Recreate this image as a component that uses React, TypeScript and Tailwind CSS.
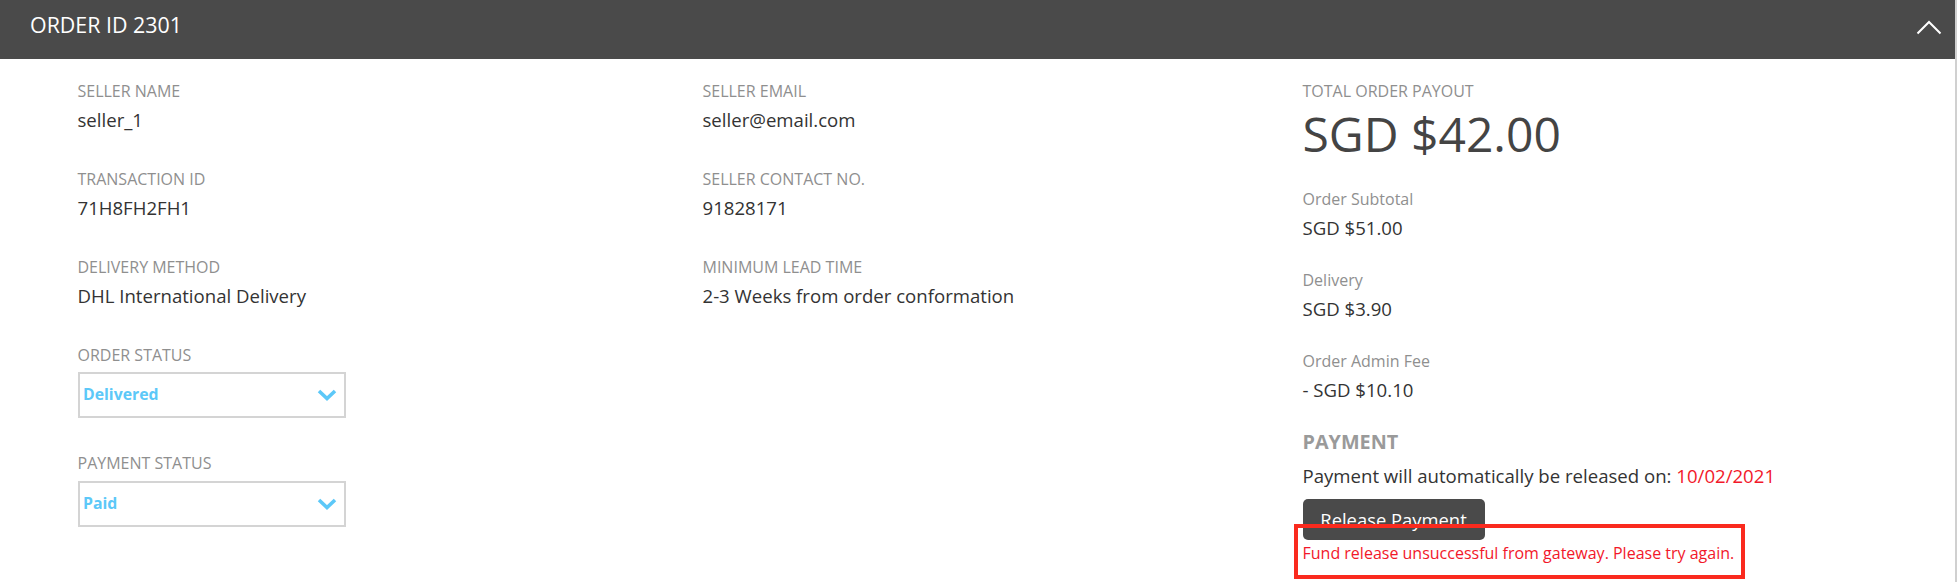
import React from "react";

function Label({ children }: { children: React.ReactNode }) {
  return <div className="text-[16px] leading-[22px] text-[#8f8f8f] whitespace-nowrap">{children}</div>;
}

function Value({ children, className = "" }: { children: React.ReactNode; className?: string }) {
  return (
    <div className={"mt-[5.5px] text-[18.6px] leading-[26px] text-[#333333] whitespace-nowrap " + className}>
      {children}
    </div>
  );
}

function Field({ label, value, className = "" }: { label: string; value: React.ReactNode; className?: string }) {
  return (
    <div className={className}>
      <Label>{label}</Label>
      <Value>{value}</Value>
    </div>
  );
}

function ChevronDown() {
  return (
    <svg width="20" height="12" viewBox="0 0 20 12" fill="none">
      <path d="M2 2 L10 9.5 L18 2" stroke="#5cc8f8" strokeWidth="3.6" strokeLinecap="butt" strokeLinejoin="miter" />
    </svg>
  );
}

function SelectBox({ value }: { value: string }) {
  return (
    <div className="flex h-[46px] w-[268px] items-center justify-between border-2 border-[#d4d4d4] bg-white pl-[3.5px] pr-[7px]">
      <span className="text-[15.8px] font-bold text-[#5cc8f8]">{value}</span>
      <ChevronDown />
    </div>
  );
}

export default function App() {
  return (
    <div className="h-[582px] w-[1957px] border-r-2 border-[#d0d0d0] bg-white font-['Open_Sans',sans-serif]">
      <div className="flex h-[59px] items-start justify-between bg-[#4a4a4a] pl-[30px] pr-[13px]">
        <div className="pt-[11px] text-[21.4px] leading-[28px] text-white">ORDER ID 2301</div>
        <svg className="mt-[20px]" width="26" height="15" viewBox="0 0 26 15" fill="none">
          <path d="M1.5 13.5 L13 2 L24.5 13.5" stroke="#ffffff" strokeWidth="2" />
        </svg>
      </div>

      <div className="grid grid-cols-[625px_600px_1fr] pl-[77.5px] pt-[20.5px]">
        {/* Column 1 */}
        <div className="flex flex-col">
          <Field label="SELLER NAME" value="seller_1" className="mb-[34.5px]" />
          <Field label="TRANSACTION ID" value="71H8FH2FH1" className="mb-[34.5px]" />
          <Field label="DELIVERY METHOD" value="DHL International Delivery" className="mb-[34.5px]" />
          <div className="mb-[34px]">
            <Label>ORDER STATUS</Label>
            <div className="mt-[6.5px]">
              <SelectBox value="Delivered" />
            </div>
          </div>
          <div>
            <Label>PAYMENT STATUS</Label>
            <div className="mt-[7px]">
              <SelectBox value="Paid" />
            </div>
          </div>
        </div>

        {/* Column 2 */}
        <div className="flex flex-col">
          <Field label="SELLER EMAIL" value="seller@email.com" className="mb-[34.5px]" />
          <Field label="SELLER CONTACT NO." value="91828171" className="mb-[34.5px]" />
          <Field label="MINIMUM LEAD TIME" value="2-3 Weeks from order conformation" />
        </div>

        {/* Column 3 */}
        <div className="flex flex-col">
          <Label>TOTAL ORDER PAYOUT</Label>
          <div className="mt-[4px] text-[48px] leading-[56px] text-[#444444] whitespace-nowrap">SGD $42.00</div>
          <Field label="Order Subtotal" value="SGD $51.00" className="mt-[26.4px]" />
          <Field label="Delivery" value="SGD $3.90" className="mt-[27.5px]" />
          <Field label="Order Admin Fee" value="- SGD $10.10" className="mt-[27.5px]" />
          <div className="mt-[25.2px] text-[19.8px] font-bold leading-[26px] text-[#9a9a9a]">PAYMENT</div>
          <div className="mt-[8.6px] text-[18.6px] leading-[26px] text-[#333333] whitespace-nowrap">
            Payment will automatically be released on: <span className="text-[#f2182a]">10/02/2021</span>
          </div>
          <div className="relative mt-[10.2px]">
            <button className="flex h-[41px] w-[182px] items-center justify-center rounded-[5px] bg-[#4a4a4a] text-[18.4px] text-white">
              Release Payment
            </button>
            <div className="mt-[1.8px] text-[16px] leading-[22px] text-[#f2182a] whitespace-nowrap">
              Fund release unsuccessful from gateway. Please try again.
            </div>
            <div className="pointer-events-none absolute left-[-8.5px] top-[24.7px] h-[55px] w-[451px] border-[4.5px] border-[#fa2a1e]" />
          </div>
        </div>
      </div>
    </div>
  );
}
